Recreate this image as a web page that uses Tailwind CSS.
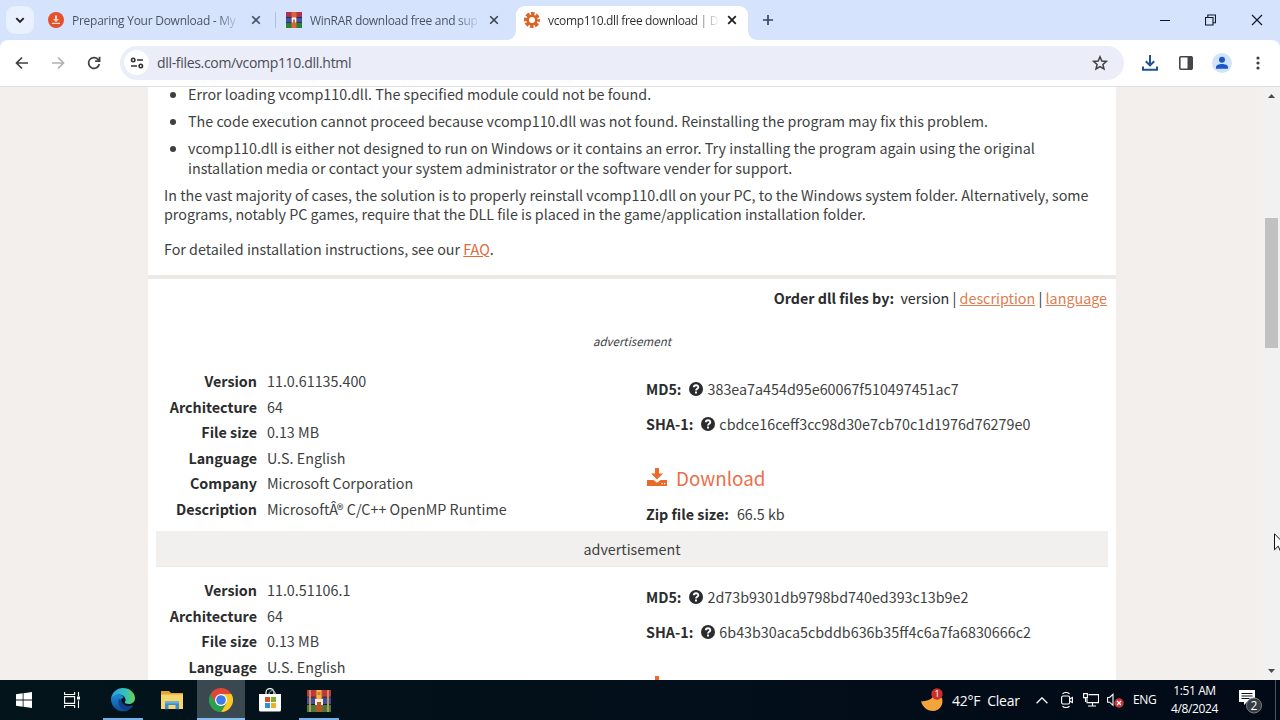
<!DOCTYPE html>
<html lang="en">
<head>
<meta charset="UTF-8">
<meta name="viewport" content="width=device-width, initial-scale=1.0">
<title>vcomp110.dll free download | DLL-files.com</title>
<script src="https://cdn.jsdelivr.net/npm/@tailwindcss/browser@4"></script>
</head>
<body class="w-[1280px] h-[720px] overflow-hidden flex flex-col bg-white font-['Open_Sans','Noto_Sans',sans-serif]">

    <!-- tab strip -->
    <header class="flex-none h-10 flex items-start bg-[#d5e3fd] text-[#474f60] text-[12px]">
        <button class="mt-[6px] ml-[6px] w-7 h-7 rounded-[9px] bg-[#eaf1fe] flex items-center justify-center">
            <svg class="w-3 h-3" viewBox="0 0 12 12" fill="none" stroke="#1f1f1f" stroke-width="1.9"><path d="M2.3 4.2 6 7.9l3.700-3.700"/></svg>
        </button>
        <div class="w-[241px] h-10 pl-[14px] flex items-center">
            <svg class="w-4 h-4 flex-none" viewBox="0 0 16 16"><circle cx="8" cy="8" r="8" fill="#e5512c"/><path d="M7 3.500h2v3.500h2L8 10 5 7h2zM4 10.800h8v1.200H4z" fill="#fbd9c9"/></svg>
            <span class="ml-2 w-[172px] pt-px whitespace-nowrap bg-linear-to-r from-[#474f60] from-84% to-transparent to-98% bg-clip-text text-transparent tracking-[-0.26px]">Preparing Your Download - My</span>
            <svg class="ml-[7px] w-[10px] h-[10px]" viewBox="0 0 10 10" stroke="#474f60" stroke-width="1.6"><path d="m1.200 1.200 7.600 7.600M8.800 1.200 1.200 8.800"/></svg>
        </div>
        <div class="w-[241px] h-10 flex items-center">
            <div class="w-px h-4 bg-[#a9bfea]"></div>
            <svg class="ml-[10px] w-4 h-4 flex-none" viewBox="0 0 16 16"><path fill="#b03050" d="M0 0h16v5H0z"/><path fill="#3d56b0" d="M0 5h16v5.500H0z"/><path fill="#2f7d3a" d="M0 10.500h16V16H0z"/><path fill="#20202a" d="M0 5h16v.8H0zm0 5.300h16v.8H0z"/><path fill="#d8662e" d="M5.500 0h5v16h-5z"/><path fill="#fff" d="M5.800 5.500h4.400v5H9v-3H7v3H5.800z"/></svg>
            <span class="ml-2 w-[174px] pt-px whitespace-nowrap bg-linear-to-r from-[#474f60] from-84% to-transparent to-98% bg-clip-text text-transparent tracking-[-0.3px]">WinRAR download free and sup</span>
            <svg class="ml-[5px] w-[10px] h-[10px]" viewBox="0 0 10 10" stroke="#3a4252" stroke-width="1.6"><path d="m1.200 1.200 7.600 7.600M8.800 1.200 1.200 8.800"/></svg>
        </div>
        <div class="relative mt-[6px] w-[232px] h-[34px] rounded-t-[9px] bg-white flex items-center pb-[6px] text-[#2a2b2e]">
            <svg class="absolute -left-[9px] bottom-0 w-[9px] h-[9px]" viewBox="0 0 9 9"><path fill="#fff" d="M9 0v9H0a9 9 0 0 0 9-9z"/></svg>
            <svg class="absolute -right-[9px] bottom-0 w-[9px] h-[9px]" viewBox="0 0 9 9"><path fill="#fff" d="M0 0v9h9a9 9 0 0 1-9-9z"/></svg>
            <svg class="ml-2 w-4 h-4 flex-none" viewBox="0 0 16 16"><circle cx="8" cy="8" r="4.300" fill="none" stroke="#dd6325" stroke-width="2.600"/><circle cx="8" cy="8" r="6.500" fill="none" stroke="#dd6325" stroke-width="3" stroke-dasharray="3.600 1.505" stroke-dashoffset="1.800"/></svg>
            <span class="ml-2 w-[172px] pt-px whitespace-nowrap bg-linear-to-r from-[#2a2b2e] from-84% to-transparent to-100% bg-clip-text text-transparent tracking-[-0.34px]">vcomp110.dll free download | D</span>
            <svg class="ml-[7px] w-[10px] h-[10px]" viewBox="0 0 10 10" stroke="#1f1f1f" stroke-width="1.800"><path d="m1.200 1.200 7.600 7.600M8.800 1.200 1.200 8.800"/></svg>
        </div>
        <svg class="ml-[14px] mt-[14px] w-3 h-3" viewBox="0 0 12 12" stroke="#3c4657" stroke-width="1.700"><path d="M6 1v10M1 6h10"/></svg>
        <div class="ml-auto mr-[17px] mt-[14px] flex items-center gap-[35px]">
            <svg class="w-[11px] h-3" viewBox="0 0 11 12" stroke="#111827" stroke-width="1"><path d="M1 6.500h10"/></svg>
            <svg class="w-[11px] h-3" viewBox="0 0 11 12" fill="none" stroke="#111827" stroke-width="1.100"><path d="M.5 3.500h7.500V11H.5zM2.800 3.500V1h7.700v7.700H8"/></svg>
            <svg class="w-3 h-3" viewBox="0 0 12 12" stroke="#111827" stroke-width="1.200"><path d="m1 1 10 10M11 1 1 11"/></svg>
        </div>
    </header>

    <!-- toolbar -->
    <div class="bg-[#d5e3fd] flex-none">
        <div class="h-[47px] pb-px bg-white rounded-t-[8px] border-b border-[#dfe0e2] flex items-center">
            <svg class="ml-[15px] w-[14px] h-[14px]" viewBox="0 0 14 14" fill="none" stroke="#3f4043" stroke-width="1.700"><path d="M13 7H2M7 1.500 1.500 7 7 12.500"/></svg>
            <svg class="ml-[22px] w-[14px] h-[14px]" viewBox="0 0 14 14" fill="none" stroke="#b0b1b4" stroke-width="1.700"><path d="M1 7h11M7 1.500 12.500 7 7 12.500"/></svg>
            <svg class="ml-[22px] w-[14px] h-[14px]" viewBox="0 0 14 14" fill="none" stroke="#3f4043" stroke-width="1.700"><path d="M12.300 8A5.400 5.400 0 1 1 10.900 3.200L12.500 4.800"/><path d="M12.600.8v4.400H8.200"/></svg>
            <div class="ml-[19px] w-[1004px] h-[34px] rounded-full bg-[#ebedf8] flex items-center">
                <div class="ml-1 w-[25px] h-[25px] rounded-full bg-white flex items-center justify-center">
                    <svg class="w-[14px] h-[12px]" viewBox="0 0 14 12" fill="none" stroke="#303134" stroke-width="1.600"><circle cx="3.200" cy="3" r="1.700"/><path d="M7 3h6M1 9h6"/><circle cx="10.800" cy="9" r="1.700"/></svg>
                </div>
                <span class="ml-2 text-[14px] text-[#4a4c52] whitespace-nowrap tracking-[-0.32px]">dll-files.com/vcomp110.dll.html</span>
                <svg class="ml-auto mr-4 w-4 h-4" viewBox="0 0 16 16" fill="none" stroke="#3f4043" stroke-width="1.500"><path d="m8 1.800 1.800 4.200 4.600.4-3.500 3 1.100 4.500L8 11.500l-4 2.400 1.100-4.500-3.500-3L6.200 6z"/></svg>
            </div>
            <svg class="ml-[18px] w-4 h-4" viewBox="0 0 16 16" fill="none" stroke="#1d5296" stroke-width="2"><path d="M8 0v10M3.800 6.200 8 10.400l4.200-4.200M1 11.500v3.200h14v-3.200"/></svg>
            <svg class="ml-[21px] w-[14px] h-[14px]" viewBox="0 0 14 14"><rect x=".8" y=".8" width="12.400" height="12.400" rx="1" fill="none" stroke="#454649" stroke-width="1.600"/><path d="M8.500 0H13v14H8.500z" fill="#454649"/></svg>
            <svg class="ml-[19px] w-5 h-5" viewBox="0 0 20 20"><circle cx="10" cy="10" r="10" fill="#d2e3fc"/><circle cx="10" cy="6.800" r="3" fill="#1b57c8"/><path d="M4 15.700v-1.600c0-2 3-3.100 6-3.100s6 1.100 6 3.100v1.600z" fill="#1b57c8"/></svg>
            <svg class="ml-[24px] w-1 h-[14px]" viewBox="0 0 4 14" fill="#3f4043"><circle cx="2" cy="2" r="1.600"/><circle cx="2" cy="7" r="1.600"/><circle cx="2" cy="12" r="1.600"/></svg>
        </div>
    </div>

    <!-- page -->
    <div class="relative h-[593px] flex-none flex overflow-hidden bg-[#f2efed]">
        <main class="ml-[148px] w-[968px] h-full overflow-hidden bg-white font-['Noto_Sans_CJK_SC','Noto_Sans',sans-serif] text-[14.320px] text-[#3e3f41] whitespace-nowrap [&_b]:text-[#2b2c2d] [&_dt]:text-[#2b2c2d]">
            <section class="h-[195px] pl-4 -mt-[3px] border-b-4 border-[#ece9e7] box-border leading-[19.500px]">
                <ul class="list-disc pl-6 flex flex-col gap-[7.500px]">
                    <li>Error loading vcomp110.dll. The specified module could not be found.</li>
                    <li>The code execution cannot proceed because vcomp110.dll was not found. Reinstalling the program may fix this problem.</li>
                    <li>vcomp110.dll is either not designed to run on Windows or it contains an error. Try installing the program again using the original<br>installation media or contact your system administrator or the software vender for support.</li>
                </ul>
                <p class="mt-[7.500px]">In the vast majority of cases, the solution is to properly reinstall vcomp110.dll on your PC, to the Windows system folder. Alternatively, some<br>programs, notably PC games, require that the DLL file is placed in the game/application installation folder.</p>
                <p class="mt-[15px]">For detailed installation instructions, see our <a class="text-[#e0693a] underline" href="#">FAQ</a>.</p>
            </section>

            <div class="mt-[9px] pr-[9px] h-5 leading-5 text-right text-[#2b2c2d]">
                <b>Order dll files by:</b>&nbsp; version | <a class="text-[#e07c50] underline" href="#">description</a> | <a class="text-[#e07c50] underline" href="#">language</a>
            </div>
            <p class="mt-[23px] h-5 leading-5 text-center text-[11.500px] italic">advertisement</p>

            <section class="mt-[17px] h-[163px] flex">
                <dl class="w-[498px] grid grid-cols-[109px_1fr] gap-x-[10px] auto-rows-[25.600px] leading-[25.600px]">
                    <dt class="text-right font-bold">Version</dt><dd>11.0.61135.400</dd>
                    <dt class="text-right font-bold">Architecture</dt><dd>64</dd>
                    <dt class="text-right font-bold">File size</dt><dd>0.13 MB</dd>
                    <dt class="text-right font-bold">Language</dt><dd>U.S. English</dd>
                    <dt class="text-right font-bold">Company</dt><dd>Microsoft Corporation</dd>
                    <dt class="text-right font-bold">Description</dt><dd>MicrosoftÂ® C/C++ OpenMP Runtime</dd>
                </dl>
                <div class="pt-[11px] leading-5">
                    <p class="flex items-center h-5"><b>MD5:</b><svg class="ml-[7.500px] mr-[4.500px] -mt-px w-[14px] h-[14px]" viewBox="0 0 14 14"><circle cx="7" cy="7" r="7" fill="#2a2b2c"/><path d="M4.800 5.300c.2-2.800 4.600-2.500 4.500 0C9.300 6.800 7 6.700 7 8.400M7 9.600v2" fill="none" stroke="#fff" stroke-width="1.900"/></svg><span>383ea7a454d95e60067f510497451ac7</span></p>
                    <p class="mt-[15px] flex items-center h-5"><b>SHA-1:</b><svg class="ml-[7.500px] mr-[4.500px] -mt-px w-[14px] h-[14px]" viewBox="0 0 14 14"><circle cx="7" cy="7" r="7" fill="#2a2b2c"/><path d="M4.800 5.300c.2-2.800 4.600-2.500 4.500 0C9.300 6.800 7 6.700 7 8.400M7 9.600v2" fill="none" stroke="#fff" stroke-width="1.900"/></svg><span>cbdce16ceff3cc98d30e7cb70c1d1976d76279e0</span></p>
                    <a class="mt-[30px] h-[28px] flex items-center text-[18.800px] text-[#e8704a]" href="#"><svg class="ml-px mr-[9px] mb-[2px] w-5 h-[18px]" viewBox="0 0 20 18" fill="#ea6a2a"><path d="M8 0h4v5.500h4L10 11.500 4 5.500h4z"/><path d="M0 12h6.500L10 14.800l3.500-2.800H20v6H0z"/><path fill="#fff" d="M14.500 15h1.200v1.200h-1.200zm2.500 0h1.200v1.200H17z"/></svg>Download</a>
                    <p class="mt-3 h-5"><b>Zip file size:</b><span class="ml-2">66.5 kb</span></p>
                </div>
            </section>

            <div class="mx-2 h-[36px] leading-[36px] bg-[#f2f0ee] border-b border-[#ebe8e5] text-center">advertisement</div>

            <section class="mt-[10px] flex">
                <dl class="w-[498px] grid grid-cols-[109px_1fr] gap-x-[10px] auto-rows-[25.600px] leading-[25.600px]">
                    <dt class="text-right font-bold">Version</dt><dd>11.0.51106.1</dd>
                    <dt class="text-right font-bold">Architecture</dt><dd>64</dd>
                    <dt class="text-right font-bold">File size</dt><dd>0.13 MB</dd>
                    <dt class="text-right font-bold">Language</dt><dd>U.S. English</dd>
                </dl>
                <div class="pt-[10px] leading-5">
                    <p class="flex items-center h-5"><b>MD5:</b><svg class="ml-[7.500px] mr-[4.500px] -mt-px w-[14px] h-[14px]" viewBox="0 0 14 14"><circle cx="7" cy="7" r="7" fill="#2a2b2c"/><path d="M4.800 5.300c.2-2.800 4.600-2.500 4.500 0C9.300 6.800 7 6.700 7 8.400M7 9.600v2" fill="none" stroke="#fff" stroke-width="1.900"/></svg><span>2d73b9301db9798bd740ed393c13b9e2</span></p>
                    <p class="mt-[15px] flex items-center h-5"><b>SHA-1:</b><svg class="ml-[7.500px] mr-[4.500px] -mt-px w-[14px] h-[14px]" viewBox="0 0 14 14"><circle cx="7" cy="7" r="7" fill="#2a2b2c"/><path d="M4.800 5.300c.2-2.800 4.600-2.500 4.500 0C9.300 6.800 7 6.700 7 8.400M7 9.600v2" fill="none" stroke="#fff" stroke-width="1.900"/></svg><span>6b43b30aca5cbddb636b35ff4c6a7fa6830666c2</span></p>
                    <a class="mt-[34px] ml-px block" href="#"><svg class="w-5 h-[18px]" viewBox="0 0 20 18" fill="#ea6a2a"><path d="M8 0h4v5.500h4L10 11.500 4 5.500h4z"/><path d="M0 12h6.500L10 14.800l3.500-2.800H20v6H0z"/></svg></a>
                </div>
            </section>
        </main>
        <!-- scrollbar -->
        <div class="ml-auto w-[17px] h-full bg-[#f1f1f1] flex flex-col items-center">
            <svg class="mt-[7px] w-[7px] h-1" viewBox="0 0 7 4" fill="#4b4b4b"><path d="M3.500 0 7 4H0z"/></svg>
            <div class="mt-[120px] w-[13px] h-[130px] bg-[#c1c1c1]"></div>
            <svg class="mt-auto mb-[7px] w-[7px] h-1" viewBox="0 0 7 4" fill="#4b4b4b"><path d="M3.500 4 7 0H0z"/></svg>
        </div>
        <!-- mouse pointer at the right edge -->
        <svg class="absolute left-[1274px] top-[446px] w-[12px] h-[19px]" viewBox="0 0 12 19"><path d="M.5.800v16l3.700-3.600L6.600 18.500l2.200-1-2.300-5.200h5.200z" fill="#fff" stroke="#111"/></svg>
    </div>

    <!-- taskbar -->
    <footer class="h-10 flex-none flex bg-linear-to-r from-[#03141b] to-[#020a18] text-white">
        <div class="w-12 h-10 flex items-center justify-center">
            <svg class="w-4 h-4" viewBox="0 0 16 16" fill="#fff"><path d="M0 2.200 6.700 1.300v6.300H0zM7.500 1.200 16 0v7.600H7.500zM0 8.400h6.700v6.300L0 13.800zM7.500 8.400H16V16l-8.500-1.200z"/></svg>
        </div>
        <div class="w-12 h-10 flex items-center justify-center">
            <svg class="w-4 h-4" viewBox="0 0 16 16" fill="none" stroke="#fff" stroke-width="1.100"><path d="M.6 0v2.500h10V0M.6 16v-2.500h10V16M.6 4.600h10v6.800H.6zM14.500 0v4M14.500 8.500V16"/><path fill="#fff" stroke="none" d="M13 4.500h3v3h-3z"/></svg>
        </div>
        <div class="w-[54px] h-10 flex flex-col items-center justify-end">
            <svg class="w-6 h-6 mb-[6px]" viewBox="0 0 24 24">
                <defs>
                    <linearGradient id="edgeTop" x1="0" x2="1"><stop offset="0" stop-color="#2a9fe0"/><stop offset=".6" stop-color="#35c1bf"/><stop offset="1" stop-color="#6ad450"/></linearGradient>
                    <linearGradient id="edgeLow" y1="0" y2="1" x2="0"><stop offset="0" stop-color="#1b8bd6"/><stop offset="1" stop-color="#0d4c98"/></linearGradient>
                </defs>
                <path fill="url(#edgeLow)" d="M0 12c0-4 4-6 8-5.500 3 .3 4.500 2 4.500 3.500-3 0-4 5.500 1.500 8 3 1.200 6 .6 8.200-.4A12 12 0 0 1 0 12z"/>
                <path fill="url(#edgeTop)" d="M0 11.500A12 12 0 0 1 12 0c7 0 12 5 12 10 0 4-3 6-6.500 6-3 0-4-1.200-3.700-2 .8-1 .9-2 .6-3C13.700 8 10.500 6.500 7 6.600 3.600 6.700.8 8.700 0 11.500z"/>
                <path fill="#123f86" d="M8 11c-1.600 4 .2 9.500 6.500 11.500 3-.8 6-3 7.700-5.300-6 2.300-11.500-.7-11.700-5.200z"/>
            </svg>
            <div class="w-10 h-[2px] bg-[#76b0e8]"></div>
        </div>
        <div class="w-[46px] h-10 flex items-center justify-center">
            <svg class="w-[22px] h-[19px] -ml-[2px]" viewBox="0 0 22 19"><path fill="#e2a52f" d="M0 0h8l2 2h12v4H0z"/><path fill="#f8d66e" d="M0 3.500h22V18H0z"/><path fill="#3f8ccc" d="M4 10.500h14v7.800h-3.500V14h-7v4.300H4z"/><path fill="#65aee3" d="M4 10.500h14v2H4z"/></svg>
        </div>
        <div class="ml-px w-12 h-10 bg-[#3a4850] flex flex-col items-center justify-end">
            <svg class="w-6 h-6 mb-[6px]" viewBox="0 0 24 24"><path fill="#e24436" d="M12 12 1.600 6A12 12 0 0 1 22.400 6z"/><path fill="#2da04e" d="M12 12v12A12 12 0 0 1 1.600 6z"/><path fill="#fbc926" d="M12 6h10.400A12 12 0 0 1 12 24l5.200-9z"/><path fill="#e24436" d="M6.800 15 1.600 6H12z"/><path fill="#2da04e" d="m6.800 15 10.400 0L12 24z"/><circle cx="12" cy="12" r="6" fill="#fff"/><circle cx="12" cy="12" r="4.800" fill="#3c7cea"/></svg>
            <div class="w-12 h-[2px] bg-[#84bdf0]"></div>
        </div>
        <div class="w-[50px] h-10 flex items-center justify-center">
            <svg class="w-6 h-6" viewBox="0 0 24 24"><path d="M8 7V4.500a4 4 0 0 1 8 0V7" fill="none" stroke="#e9eef0" stroke-width="1.300"/><path d="M11 6c0-4 6-5 6.500 0" fill="none" stroke="#9fb0b5" stroke-width="1"/><path fill="#fff" d="M1 6h22v16a1.500 1.500 0 0 1-1.500 1.500h-19A1.500 1.500 0 0 1 1 22z"/><path fill="#d4532c" d="M7 9h5v5H7z"/><path fill="#84ad2c" d="M13 9h5v5h-5z"/><path fill="#2a93d4" d="M7 15h5v5H7z"/><path fill="#eeb21e" d="M13 15h5v5h-5z"/></svg>
        </div>
        <div class="w-12 h-10 flex flex-col items-center justify-end">
            <svg class="w-6 h-6 mb-[5px]" viewBox="0 0 24 24"><path fill="#c13540" d="M0 1h24v7H0z"/><path fill="#3c4f9c" d="M0 8h24v7.500H0z"/><path fill="#3f7d3a" d="M0 15.500h24V23H0z"/><path fill="#1a1d2b" d="M0 7.800h24v.8H0zm0 7.300h24v.8H0z"/><path fill="#c9925a" d="M2 1h2v22H2zm18 0h2v22h-2z"/><path fill="#b5562a" d="M8.500 1h7v22h-7z"/><path fill="#f0b945" d="M9.500 1h5v9h-5z"/><path fill="#f4ead6" d="M8 10h8v6h-2v-3h-4v3H8z"/><path fill="#e07a2b" d="M10.500 3h3v3h-3z"/></svg>
            <div class="w-10 h-[2px] bg-[#76b0e8]"></div>
        </div>

        <!-- notification area -->
        <div class="ml-auto flex items-center h-10">
            <svg class="w-6 h-6" viewBox="0 0 24 24"><path fill="#f3a43a" d="M13.500 3c1 5-1 10-12.500 10.500C3 20 8 23 13 23c7 0 11-7 9-13z"/><circle cx="17" cy="6" r="5.700" fill="#c9302c"/><text x="17" y="9.300" text-anchor="middle" font-size="9" fill="#fff" font-family="Open Sans">1</text></svg>
            <span class="ml-2 w-[69px] text-[14px] whitespace-pre tracking-[-0.22px]">42°F  Clear</span>
            <svg class="ml-[15px] w-3 h-[7px]" viewBox="0 0 12 7" fill="none" stroke="#fff" stroke-width="1.300"><path d="m.6 6.300 5.400-5.500 5.400 5.500"/></svg>
            <svg class="ml-[13px] w-3 h-4" viewBox="0 0 12 16" fill="none" stroke="#fff" stroke-width="1.100"><rect x=".6" y="4" width="8" height="8" rx="1.500"/><path d="m8.600 7 2.800-1.500v5L8.600 9M1.500 1.800c2-1.500 5-1.500 7 0M1.500 14.200c2 1.500 5 1.500 7 0"/></svg>
            <svg class="ml-[10px] w-4 h-[14px]" viewBox="0 0 16 14" fill="none" stroke="#fff" stroke-width="1.100"><path d="M5.500 1.600h10v8H4V5.500M9.500 9.600V13M5 13h8M.6.6h3.800v4H.6zM2.500 4.600V9"/></svg>
            <svg class="ml-2 w-[17px] h-[15px]" viewBox="0 0 17 15"><path d="M.6 4.500h2L6 1.300v11L2.600 9.200h-2z" fill="none" stroke="#fff" stroke-width="1.100"/><circle cx="12" cy="10" r="4.700" fill="#cf3338"/><path d="m10 8 4 4M14 8l-4 4" stroke="#fff" stroke-width="1.200"/></svg>
            <span class="ml-[9px] w-[24px] text-[12px] tracking-[-0.4px]">ENG</span>
            <div class="ml-[11px] w-[53px] text-center text-[12px] leading-[18px] tracking-[-0.4px] whitespace-nowrap">1:51 AM<br>4/8/2024</div>
            <svg class="ml-[17px] w-6 h-6 mt-[3px]" viewBox="0 0 24 24"><path fill="#fff" d="M1 0h16v12H9l-3 3v-3H1z"/><path stroke="#03121b" stroke-width="1.100" d="M3.500 3.500h11M3.500 6h11M3.500 8.500h8"/><circle cx="16" cy="15.500" r="7.500" fill="#353c42" stroke="#7a8287"/><text x="16" y="19.800" text-anchor="middle" font-size="12" fill="#fff" font-family="Open Sans">2</text></svg>
            <div class="ml-[13px] mr-1 w-px h-10 bg-[#4a5459]"></div>
        </div>
    </footer>
</body>
</html>
